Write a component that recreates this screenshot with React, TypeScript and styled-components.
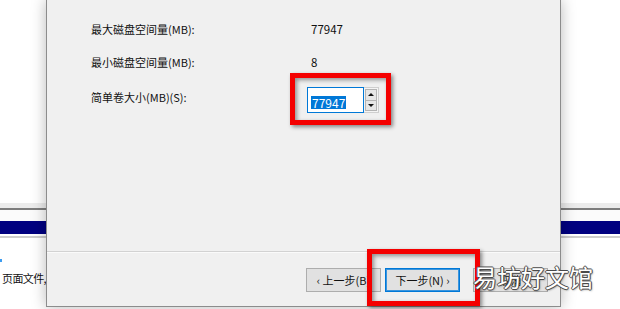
import React from "react";
import styled, { createGlobalStyle } from "styled-components";

const GlobalStyle = createGlobalStyle`
  html, body {
    margin: 0;
    padding: 0;
    width: 620px;
    height: 309px;
    overflow: hidden;
    background: #fff;
  }
  body {
    font-family: "Noto Sans CJK SC", "Noto Sans", sans-serif;
    color: #000;
  }
  * { box-sizing: border-box; }
`;

const Screen = styled.div`
  position: relative;
  width: 620px;
  height: 309px;
  overflow: hidden;
  background: #fff;
`;

/* window behind the dialog */
const Backdrop = styled.div`
  display: flex;
  flex-direction: column;
  height: 100%;
`;

const Band = styled.div<{ $h: number; $bg: string }>`
  height: ${(p) => p.$h}px;
  flex-shrink: 0;
  background: ${(p) => p.$bg};
`;

const BackContent = styled.div`
  display: flex;
  flex-direction: column;
  padding-left: 2px;
`;

const LinkTick = styled.span`
  width: 2px;
  height: 3px;
  margin: 21px 0 0 -2px;
  background: #3c9cf0;
`;

const BackText = styled.span`
  margin-top: 8px;
  font-size: 11px;
  line-height: 16px;
  letter-spacing: -0.6px;
  color: #111;
  white-space: nowrap;
`;

/* the wizard dialog */
const Dialog = styled.div`
  position: absolute;
  left: 46px;
  top: 0;
  width: 515px;
  height: 307px;
  display: flex;
  flex-direction: column;
  background: #f0f0f0;
  border: 1px solid #8c8c8c;
  border-top: none;
  box-shadow: 0 0 14px rgba(0, 0, 0, 0.28);
`;

const Body = styled.div`
  height: 251px;
  padding: 20px 0 0 44px;
`;

const Form = styled.div`
  display: grid;
  grid-template-columns: 216px auto;
  grid-template-rows: 17px 16px 26px;
  row-gap: 17px;
  align-items: center;
`;

const Label = styled.span<{ $top?: boolean }>`
  font-size: 11px;
  line-height: 16px;
  color: #111;
  white-space: nowrap;
  align-self: ${(p) => (p.$top ? "start" : "center")};
  padding-top: ${(p) => (p.$top ? 2 : 0)}px;
`;

const Value = styled.span`
  font-size: 11.5px;
  line-height: 16px;
  padding-left: 4px;
  color: #111;
`;

const Annotated = styled.div`
  position: relative;
  display: inline-flex;
`;

const RedFrame = styled.span<{ $x: number; $y: number; $w: number; $h: number }>`
  position: absolute;
  left: ${(p) => p.$x}px;
  top: ${(p) => p.$y}px;
  width: ${(p) => p.$w}px;
  height: ${(p) => p.$h}px;
  border: 5px solid #f40000;
  box-shadow: 2px 2px 4px rgba(0, 0, 0, 0.45),
    inset 2px 2px 4px rgba(0, 0, 0, 0.4);
  pointer-events: none;
`;

const SpinField = styled.div`
  display: flex;
  height: 26px;
`;

const NumberBox = styled.div`
  width: 57px;
  height: 26px;
  background: #fff;
  border: 1px solid #0078d7;
  padding: 1px 0 0 3px;
`;

const Selected = styled.span`
  display: inline-block;
  font-size: 12px;
  line-height: 13px;
  padding: 0 1px;
  background: #0078d7;
  color: #fff;
`;

const Spinner = styled.div`
  width: 15px;
  height: 26px;
  display: flex;
  flex-direction: column;
  padding: 1px;
  background: #f4f4f4;
  border: 1px solid #cfcfcf;
  border-left: none;
`;

const SpinButton = styled.div`
  flex: 1;
  display: flex;
  align-items: center;
  justify-content: center;
  background: #e6e6e6;
  border: 1px solid #b4b4b4;

  & + & {
    margin-top: -1px;
  }
`;

const Arrow = styled.span<{ $down?: boolean }>`
  width: 0;
  height: 0;
  border-left: 3px solid transparent;
  border-right: 3px solid transparent;
  ${(p) =>
    p.$down ? "border-top: 3px solid #111;" : "border-bottom: 3px solid #111;"}
`;

const Footer = styled.div`
  flex: 1;
  display: flex;
  justify-content: flex-end;
  align-items: flex-start;
  padding: 16px 12px 0 0;
  border-top: 1px solid #d2d2d2;
  box-shadow: inset 0 1px 0 #fafafa;
`;

const WizardButton = styled.button<{ $primary?: boolean; $gap?: number }>`
  width: 75px;
  height: 24px;
  margin-left: ${(p) => p.$gap ?? 0}px;
  padding: 0;
  font-family: inherit;
  font-size: 11px;
  line-height: 14px;
  color: #111;
  background: #e1e1e1;
  border: 1px solid ${(p) => (p.$primary ? "#0078d7" : "#adadad")};
  box-shadow: ${(p) => (p.$primary ? "inset 0 0 0 1px #3b95dd" : "none")};
`;

const Watermark = styled.div`
  position: absolute;
  left: 473px;
  top: 262px;
  font-size: 24px;
  line-height: 30px;
  color: #fff;
  white-space: nowrap;
  text-shadow: 1px 0 0 #4a4a4a, -1px 0 0 #4a4a4a, 0 1px 0 #4a4a4a,
    0 -1px 0 #4a4a4a, 1px 1px 2px rgba(0, 0, 0, 0.5);
`;

export default function App() {
  return (
    <Screen>
      <GlobalStyle />
      <Backdrop>
        <Band $h={203} $bg="#fff" />
        <Band $h={5} $bg="#ececec" />
        <Band $h={2} $bg="#7d7d7d" />
        <Band $h={11} $bg="#fbfbfb" />
        <Band $h={13} $bg="#000080" />
        <Band $h={2} $bg="#fff" />
        <Band $h={2} $bg="#cdcdcd" />
        <BackContent>
          <LinkTick />
          <BackText>页面文件,</BackText>
        </BackContent>
      </Backdrop>

      <Dialog>
        <Body>
          <Form>
            <Label>最大磁盘空间量(MB):</Label>
            <Value>77947</Value>
            <Label>最小磁盘空间量(MB):</Label>
            <Value>8</Value>
            <Label $top>简单卷大小(MB)(S):</Label>
            <Annotated>
              <SpinField>
                <NumberBox>
                  <Selected>77947</Selected>
                </NumberBox>
                <Spinner>
                  <SpinButton>
                    <Arrow />
                  </SpinButton>
                  <SpinButton>
                    <Arrow $down />
                  </SpinButton>
                </Spinner>
              </SpinField>
              <RedFrame $x={-17} $y={-14} $w={101} $h={52} />
            </Annotated>
          </Form>
        </Body>
        <Footer>
          <WizardButton>&lsaquo; 上一步(B)</WizardButton>
          <Annotated>
            <WizardButton $primary $gap={4}>
              下一步(N) &rsaquo;
            </WizardButton>
            <RedFrame $x={-14} $y={-19} $w={113} $h={57} />
          </Annotated>
          <WizardButton $gap={13}>取消</WizardButton>
        </Footer>
      </Dialog>

      <Watermark>易坊好文馆</Watermark>
    </Screen>
  );
}
